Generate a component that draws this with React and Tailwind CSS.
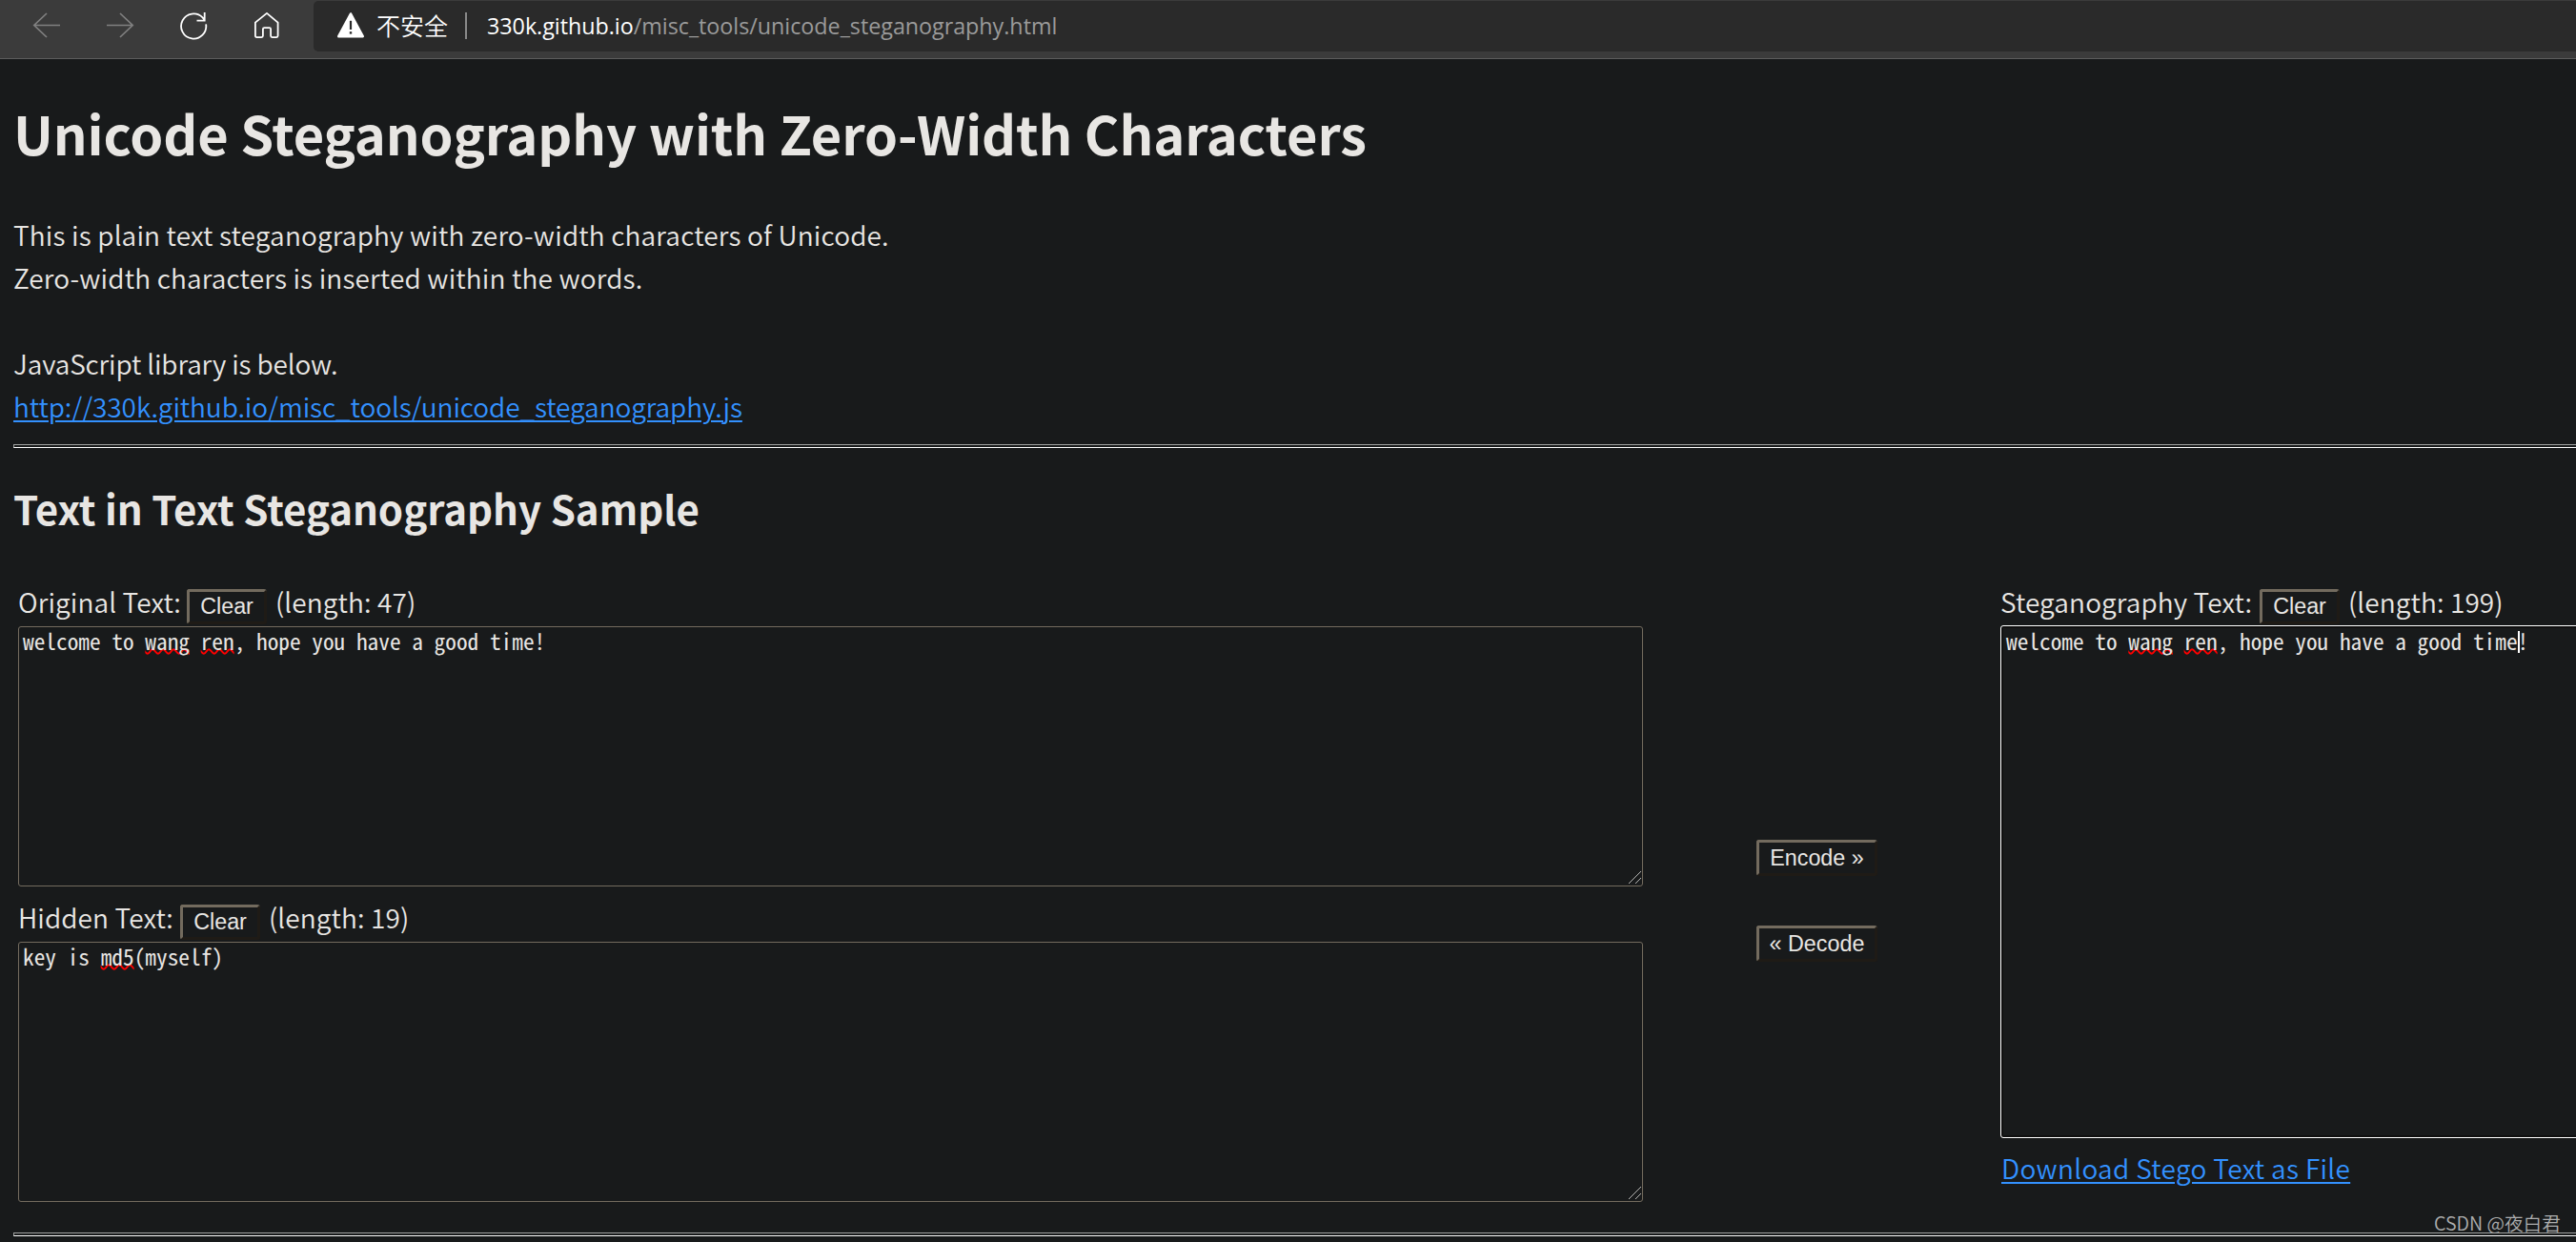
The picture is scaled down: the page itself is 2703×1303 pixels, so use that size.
const cjk = "font-['Noto_Sans_CJK_JP','Noto_Sans',sans-serif]";

const BrowserBar = () => {
  return (
    <header className="flex h-[62px] w-full shrink-0 border-b border-[#5c5c5c] bg-[#3b3b3b] pt-px">
      <div className="flex w-[329px] shrink-0 items-start pt-[11px] pl-[34px]">
        <svg className="h-[30px] w-[30px]" viewBox="0 0 30 30" fill="none" stroke="#808080" strokeWidth="1.7">
          <path d="M29 14.5H1.5M15 2L1.8 14.5L15 27" />
        </svg>
        <svg className="ml-[47px] h-[30px] w-[30px]" viewBox="0 0 30 30" fill="none" stroke="#808080" strokeWidth="1.7">
          <path d="M1 14.5H28.5M15 2L28.2 14.5L15 27" />
        </svg>
        <svg className="ml-[47px] h-[30px] w-[30px]" viewBox="0 0 30 30" fill="none" stroke="#fff" strokeWidth="1.8">
          <path d="M28.1 13.3A13.1 13.1 0 1 1 24.6 6.4L26.6 8.9M26.7 1V9.7H18.5" />
        </svg>
        <svg className="ml-[48px] h-[30px] w-[28px]" viewBox="0 0 28 30" fill="none" stroke="#fff" strokeWidth="1.8" strokeLinejoin="round">
          <path d="M14 1.9L25.6 11.6V25.6Q25.6 27.1 24.1 27.1H19.6Q18.1 27.1 18.1 25.6V18.6Q18.1 17.1 16.6 17.1H11.4Q9.9 17.1 9.9 18.6V25.6Q9.9 27.1 8.4 27.1H3.4Q1.9 27.1 1.9 25.6V11.6Z" />
        </svg>
      </div>

      {/* address field */}
      <div className="flex h-[53px] flex-1 items-start rounded-l-[5px] bg-[#2a2a2a] pt-3 pl-6">
        <svg className="h-7 w-[30px]" viewBox="0 0 30 28">
          <path d="M15 1.5L27.7 25.2H2.3Z" fill="#fff" stroke="#fff" strokeWidth="2.6" strokeLinejoin="round" />
          <path d="M15 8.8V18" stroke="#2a2a2a" strokeWidth="2.2" />
          <rect x="13.8" y="20.2" width="2.4" height="2.4" fill="#2a2a2a" />
        </svg>
        <span className="ml-[12px] w-[93px] text-[25px] leading-[26px] whitespace-nowrap text-white font-['Noto_Sans_CJK_SC',sans-serif]">
          不安全
        </span>
        <span className="h-7 w-0.5 bg-[#8a8a8a]" />
        <span className="ml-[21px] text-[23.3px] leading-[29px] font-normal tracking-[-0.02px] whitespace-nowrap text-[#9a9a9a] font-['Open_Sans',sans-serif]">
          <span className="text-white">330k.github.io</span>/misc_tools/unicode_steganography.html
        </span>
      </div>
    </header>
  );
};

const Rule = ({ className }) => (
  <div className={`h-1 w-full border-y border-l border-t-[#a0a2a0] border-b-white border-l-[#a0a2a0] ${className}`} />
);

const Button = ({ className, children }) => (
  <button
    className={`shrink-0 rounded-[3px] border-[3px] border-t-[#736b5e] border-r-[#1f1b16] border-b-[#1f1b16] border-l-[#736b5e] text-[23.33px] leading-[26px] whitespace-nowrap font-['Liberation_Sans',Arial,sans-serif] ${className}`}
  >
    {children}
  </button>
);

const Label = ({ text, length, width }) => (
  <div className="flex h-[45px] items-start tracking-[0.1px] whitespace-nowrap">
    <span className={`shrink-0 pt-px ${width}`}>{text}</span>
    <Button className="mt-2.5 h-[37px] w-[84px] pb-px tracking-normal">Clear</Button>
    <span className="ml-[9px] pt-px">(length: {length})</span>
  </div>
);

const Misspelled = ({ children }) => (
  <span className="underline decoration-[#f00] decoration-wavy decoration-[1.6px] underline-offset-[-2px] [text-decoration-skip-ink:none]">
    {children}
  </span>
);

const TextBox = ({ className, children }) => (
  <div
    className={`relative mt-1 h-[273px] rounded-[3px] border border-[#736b5e] pl-1 text-[23.33px] leading-7 font-medium whitespace-pre font-['Noto_Sans_Mono_CJK_JP','Liberation_Mono',monospace] ${className}`}
  >
    {children}
    <svg className="absolute right-px bottom-px h-3.5 w-3.5" viewBox="0 0 14 14" stroke="#b8b8b6" strokeWidth="1">
      <path d="M0.5 13.5L13.5 0.5M7.5 13.5L13.5 7.5" shapeRendering="crispEdges" />
    </svg>
  </div>
);

const App = () => {
  return (
    <div className={`relative flex h-[1303px] w-full flex-col overflow-hidden bg-[#181a1b] text-[28px] leading-[45px] text-[#e8e6e3] font-[350] ${cjk}`}>
      <BrowserBar />

      <main className="pl-3.5">
        <h1 className="mt-8 text-[56px] leading-[90px] font-bold tracking-[-0.1px]">
          Unicode Steganography with Zero-Width Characters
        </h1>
        <p className="mt-10 tracking-[0.16px]">
          This is plain text steganography with zero-width characters of Unicode.
          <br />
          Zero-width characters is inserted within the words.
          <br />
          <br />
          <span className="tracking-[-0.15px]">JavaScript library is below.</span>
          <br />
          <a className="tracking-[-0.09px] text-[#3391ff] underline decoration-2 underline-offset-[3px]">
            http://330k.github.io/misc_tools/unicode_steganography.js
          </a>
        </p>
        <Rule className="mt-[17px]" />

        <h2 className="mt-[29px] text-[42px] leading-[67px] font-bold">Text in Text Steganography Sample</h2>

        <div className="mt-[42px] flex items-start pl-[5px]">
          <section className="w-[1705px] shrink-0">
            <Label text="Original Text:" length={47} width="w-[177px]" />
            <TextBox>
              welcome to <Misspelled>wang</Misspelled> <Misspelled>ren</Misspelled>, hope you have a good time!
            </TextBox>
            <div className="h-[9px]" />
            <Label text="Hidden Text:" length={19} width="w-[170px]" />
            <TextBox>
              key is <Misspelled>md5</Misspelled>(myself)
            </TextBox>
          </section>

          <div className="ml-[119px] flex w-[127px] shrink-0 flex-col gap-[52px] pt-[273px]">
            <Button className="h-[38px]">Encode »</Button>
            <Button className="h-[38px]">« Decode</Button>
          </div>

          <section className="ml-[129px] w-[700px] shrink-0">
            <Label text="Steganography Text:" length={199} width="w-[272px]" />
            {/* focused field, runs past the right edge of the window */}
            <div className="mt-[3px] h-[538px] rounded-[3px] border border-white pt-px pl-[5px] text-[23.33px] leading-7 font-medium whitespace-pre shadow-[inset_0_0_0_2px_#101010] font-['Noto_Sans_Mono_CJK_JP','Liberation_Mono',monospace]">
              welcome to <Misspelled>wang</Misspelled> <Misspelled>ren</Misspelled>, hope you have a good time
              <span className="-mr-0.5 inline-block h-[23px] w-0.5 bg-white align-[-3px]" />!
            </div>
            <a className="mt-[9px] block pl-px tracking-[0.32px] text-[#3391ff] underline decoration-2 underline-offset-[3px]">
              Download Stego Text as File
            </a>
          </section>
        </div>
        <Rule className="mt-8" />
      </main>

      <span className="absolute right-4 bottom-1.5 text-[19.7px] leading-7 text-[#adaeae] font-['Noto_Sans_CJK_SC',sans-serif]">
        CSDN @夜白君
      </span>
    </div>
  );
};

export default App;
